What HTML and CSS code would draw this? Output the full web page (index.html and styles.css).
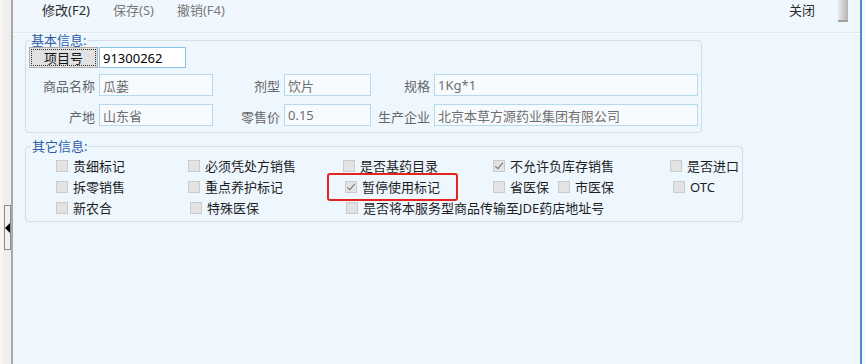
FILE: index.html
```html
<!DOCTYPE html>
<html lang="zh-CN">
<head>
  <meta charset="UTF-8" />
  <title>商品信息</title>
  <link rel="stylesheet" href="styles.css">
</head>
<body>
  <div class="app">
    <div class="sidebar">
      <div class="splitter"><span class="arrow"></span></div>
    </div>

    <div class="main">
      <div class="toolbar">
        <span class="tool">修改(F2)</span>
        <span class="tool disabled">保存(S)</span>
        <span class="tool disabled">撤销(F4)</span>
        <span class="tool close">关闭</span>
        <span class="thumb"></span>
      </div>
      <div class="sep"></div>

      <fieldset class="group basic">
        <legend>基本信息:</legend>
        <div class="row-code">
          <button class="btn-code">项目号</button>
          <input class="field code" type="text" value="91300262">
        </div>
        <div class="grid">
          <label class="lbl">商品名称</label>
          <input class="field" type="text" value="瓜蒌" disabled>
          <label class="lbl">剂型</label>
          <input class="field" type="text" value="饮片" disabled>
          <label class="lbl">规格</label>
          <input class="field" type="text" value="1Kg*1" disabled>

          <label class="lbl low">产地</label>
          <input class="field" type="text" value="山东省" disabled>
          <label class="lbl low">零售价</label>
          <input class="field" type="text" value="0.15" disabled>
          <label class="lbl low">生产企业</label>
          <input class="field" type="text" value="北京本草方源药业集团有限公司" disabled>
        </div>
      </fieldset>

      <fieldset class="group other">
        <legend>其它信息:</legend>
        <div class="checks">
          <div class="chk"><span class="box"></span>贵细标记</div>
          <div class="chk"><span class="box"></span>必须凭处方销售</div>
          <div class="chk"><span class="box"></span>是否基药目录</div>
          <div class="chk"><span class="box on"></span>不允许负库存销售</div>
          <div class="chk"><span class="box"></span>是否进口</div>

          <div class="chk"><span class="box"></span>拆零销售</div>
          <div class="chk"><span class="box"></span>重点养护标记</div>
          <div class="chk nudge flagged"><span class="box on"></span>暂停使用标记</div>
          <div class="pair">
            <div class="chk"><span class="box"></span>省医保</div>
            <div class="chk"><span class="box"></span>市医保</div>
          </div>
          <div class="chk nudge2"><span class="box"></span>OTC</div>

          <div class="chk"><span class="box"></span>新农合</div>
          <div class="chk nudge"><span class="box"></span>特殊医保</div>
          <div class="chk nudge2 wide"><span class="box"></span>是否将本服务型商品传输至JDE药店地址号</div>
        </div>
      </fieldset>
    </div>

    <div class="edge"></div>
  </div>
</body>
</html>
```

FILE: styles.css
```css
* {
    box-sizing: border-box;
    margin: 0;
    padding: 0;
}

body {
    font-family: "Noto Sans", "Noto Sans CJK SC", sans-serif;
    font-size: 13px;
    color: #1e1e1e;
    background: #eef6fe;
    height: 364px;
    overflow: hidden;
}

.app {
    display: flex;
    height: 364px;
}

.sidebar {
    position: relative;
    width: 13px;
    background: #eeeeee;
    border-left: 3px solid #f6f6f6;
    border-right: 2px solid #a8a8a8;
}

.splitter {
    position: absolute;
    left: 1px;
    top: 205px;
    width: 7px;
    height: 45px;
    border: 1px solid #8c8c8c;
    background: #f2f2f2;
}

.arrow {
    position: absolute;
    left: 0;
    top: 17px;
    border-right: 5px solid #000;
    border-top: 5px solid transparent;
    border-bottom: 5px solid transparent;
}

.main {
    flex: 1;
    min-width: 0;
}

.edge {
    width: 5px;
    border-left: 2px solid #4a8bcb;
    background: #f6f9fc;
}

/* toolbar */
.toolbar {
    display: flex;
    align-items: flex-start;
    height: 22px;
    padding-left: 29px;
    padding-right: 12px;
    background: #f0f7fe;
}

.tool {
    line-height: 20px;
    margin-right: 23px;
    color: #2a2a2a;
}

.tool.disabled {
    color: #7a7a7a;
}

.tool.close {
    margin-left: auto;
    margin-right: 23px;
}

.thumb {
    width: 10px;
    height: 22px;
    background: linear-gradient(to right, #ececec, #b4b4b4);
    border-bottom: 2px solid #a0a0a0;
    border-radius: 0 0 1px 1px;
}

.sep {
    margin-top: 10px;
    height: 2px;
    border-top: 1px solid #dfe7ef;
    border-bottom: 1px solid #ffffff;
}

/* group boxes */
.group {
    margin-left: 12px;
    border: 1px solid #d4dee8;
    border-radius: 4px;
}

.group legend {
    margin-left: 2px;
    padding: 0 1px;
    line-height: 13px;
    color: #2f5ea8;
}

.basic {
    width: 677px;
    padding: 0 3px 6px 2px;
}

.row-code {
    display: flex;
    gap: 1px;
    height: 21px;
    margin-left: 1px;
}

.btn-code {
    width: 69px;
    height: 21px;
    font: inherit;
    color: #111;
    background: #e1e1e1;
    border: 1px solid #adadad;
    outline: 1px dotted #333;
    outline-offset: -3px;
}

.field {
    height: 22px;
    padding: 0 3px;
    font: inherit;
    color: #6e6e6e;
    background: #f8fbfe;
    border: 1px solid #b5daee;
}

.field.code {
    width: 87px;
    height: 21px;
    color: #000;
    background: #fff;
    border-color: #86c3e6;
}

.grid {
    display: grid;
    grid-template-columns: 66px 114px 63px 87px 55px 264px;
    grid-auto-rows: 22px;
    column-gap: 4px;
    row-gap: 8px;
    margin-top: 6px;
    margin-left: 1px;
}

.lbl {
    text-align: right;
    line-height: 24px;
    color: #666;
}

.lbl.low {
    line-height: 27px;
}

.other {
    width: 718px;
    margin-top: 7px;
    padding: 2px 0 3px 3px;
}

.checks {
    display: grid;
    grid-template-columns: 132px 155px 150px 177px auto;
    grid-auto-rows: 21px;
    align-items: center;
    margin-left: 27px;
}

.chk {
    position: relative;
    display: flex;
    align-items: center;
    white-space: nowrap;
}

.box {
    position: relative;
    width: 12px;
    height: 12px;
    margin-right: 5px;
    background: #e3e3e3;
    border: 1px solid #cbcbcb;
}

.box.on::after {
    content: "";
    position: absolute;
    left: 3px;
    top: 0;
    width: 3px;
    height: 7px;
    border-right: 1.5px solid #707070;
    border-bottom: 1.5px solid #707070;
    transform: rotate(40deg);
}

.nudge {
    margin-left: 2px;
}

.nudge2 {
    margin-left: 3px;
}

.wide {
    grid-column: span 3;
}

.pair {
    display: flex;
    gap: 9px;
}

.flagged::after {
    content: "";
    position: absolute;
    left: -18px;
    top: -4px;
    width: 127px;
    height: 24px;
    border: 2px solid #e4251c;
    border-radius: 3px;
}
```
